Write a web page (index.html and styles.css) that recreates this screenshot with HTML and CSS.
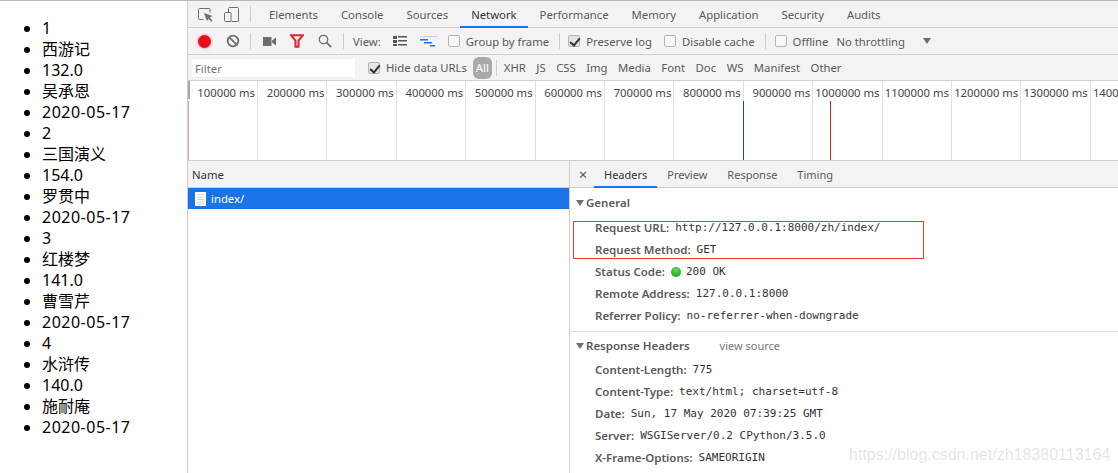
FILE: index.html
```html
<!DOCTYPE html>
<html lang="zh">
<head>
<meta charset="utf-8">
<title>Network</title>
<link rel="stylesheet" href="styles.css">
</head>
<body>
<div class="page">
  <aside class="left">
    <ul class="books">
      <li>1</li><li>西游记</li><li>132.0</li><li>吴承恩</li><li class="date">2020-05-17</li>
      <li>2</li><li>三国演义</li><li>154.0</li><li>罗贯中</li><li class="date">2020-05-17</li>
      <li>3</li><li>红楼梦</li><li>141.0</li><li>曹雪芹</li><li class="date">2020-05-17</li>
      <li>4</li><li>水浒传</li><li>140.0</li><li>施耐庵</li><li class="date">2020-05-17</li>
    </ul>
  </aside>
  <main class="dev">
    <nav class="tabs">
      <svg class="ic ic-inspect" width="15" height="15" viewBox="0 0 15 15"><path d="M5.500 12.500H1.500A1 1 0 0 1 .5 11.500V2.500A1 1 0 0 1 1.500 1.500H11A1 1 0 0 1 12 2.500V5.500" fill="none" stroke="#6e6e6e" stroke-width="1"/><path d="M6 6L14.500 9L11.700 10.500L14.500 13.500L13.200 14.700L10.500 11.700L9 14Z" fill="#6e6e6e"/></svg>
      <svg class="ic ic-device" width="15" height="15" viewBox="0 0 15 15"><path d="M4.500 5.500V1.500A1 1 0 0 1 5.500 .5H13.500A1 1 0 0 1 14.500 1.500V13.500A1 1 0 0 1 13.500 14.500H7.500" fill="none" stroke="#6e6e6e" stroke-width="1"/><rect x=".5" y="5.500" width="6.500" height="9" rx="1" fill="none" stroke="#6e6e6e"/></svg>
      <span class="vsep vsep-tabs"></span>
      <a class="tab">Elements</a><a class="tab">Console</a><a class="tab">Sources</a><a class="tab on">Network</a><a class="tab">Performance</a><a class="tab">Memory</a><a class="tab">Application</a><a class="tab">Security</a><a class="tab">Audits</a>
    </nav>
    <div class="toolbar">
      <span class="rec"></span>
      <svg class="ic ic-clear" width="14" height="14" viewBox="0 0 14 14"><circle cx="7" cy="7" r="5.300" fill="none" stroke="#6e6e6e" stroke-width="1.800"/><path d="M3.300 3.300L10.700 10.700" stroke="#6e6e6e" stroke-width="1.800"/></svg>
      <span class="vsep vsep-a"></span>
      <svg class="ic ic-cam" width="13" height="9" viewBox="0 0 13 9"><path d="M0 0H8.500V9H0ZM9 3.500L13 .5V8.500L9 5.500Z" fill="#6e6e6e"/></svg>
      <svg class="ic ic-funnel" width="14" height="14" viewBox="0 0 14 14"><path d="M1 1.200H13L8.500 6.500V12.800H5.500V6.500Z" fill="none" stroke="#e5202a" stroke-width="2"/></svg>
      <svg class="ic ic-search" width="14" height="14" viewBox="0 0 14 14"><circle cx="5.500" cy="5.500" r="4.200" fill="none" stroke="#6e6e6e" stroke-width="1.300"/><path d="M8.700 8.700L13.200 13.200" stroke="#6e6e6e" stroke-width="1.800"/></svg>
      <span class="vsep vsep-b"></span>
      <span class="lbl lbl-view">View:</span>
      <svg class="ic ic-list" width="14" height="10" viewBox="0 0 14 10"><path d="M0 0H4V3H0ZM5 0H14V1.500H5ZM0 4H4V7H0ZM5 4H14V5.500H5ZM0 8H4V10H0ZM5 8H14V9.500H5Z" fill="#555"/></svg>
      <svg class="ic ic-wfall" width="17" height="11" viewBox="0 0 17 11"><path d="M0 0H17V1H0Z" fill="#b9d2f2"/><path d="M0 3H8V4.500H0ZM4 6H12V7.500H4ZM10 9H15V10.500H10Z" fill="#1a73e8"/></svg>
      <label class="chk chk-frame"><span class="box"></span>Group by frame</label>
      <span class="vsep vsep-c"></span>
      <label class="chk chk-log"><span class="box checked"></span>Preserve log</label>
      <label class="chk chk-cache"><span class="box"></span>Disable cache</label>
      <span class="vsep vsep-d"></span>
      <label class="chk chk-off"><span class="box"></span>Offline</label>
      <span class="lbl lbl-throttle">No throttling</span>
      <span class="drop"></span>
    </div>
    <div class="filterbar">
      <span class="filter">Filter</span>
      <label class="chk chk-hide"><span class="box checked"></span>Hide data URLs</label>
      <span class="all">All</span>
      <span class="vsep vsep-e"></span>
      <span class="types"><span>XHR</span><span>JS</span><span>CSS</span><span>Img</span><span>Media</span><span>Font</span><span>Doc</span><span>WS</span><span>Manifest</span><span>Other</span></span>
    </div>
    <section class="overview">
      <div class="ticks">
        <span>100000 ms</span><span>200000 ms</span><span>300000 ms</span><span>400000 ms</span><span>500000 ms</span><span>600000 ms</span><span>700000 ms</span><span>800000 ms</span><span>900000 ms</span><span>1000000 ms</span><span>1100000 ms</span><span>1200000 ms</span><span>1300000 ms</span><span>1400000 ms</span>
      </div>
      <i class="handle"></i>
      <i class="mark mark-start"></i>
      <i class="mark mark-dom"></i>
      <i class="mark mark-load"></i>
    </section>
    <section class="split">
      <div class="names">
        <div class="names-head">Name</div>
        <div class="row-sel">
          <svg class="file" width="11" height="14" viewBox="0 0 11 14"><rect width="11" height="14" fill="#fff"/><path d="M2 2.500H9M2 5H9M2 7.500H9M2 10H9M2 12H9" stroke="#d4d4d4" stroke-width="1"/></svg>
          <span>index/</span>
        </div>
      </div>
      <div class="detail">
        <div class="detail-tabs">
          <span class="close">×</span>
          <a class="dtab on">Headers</a><a class="dtab">Preview</a><a class="dtab">Response</a><a class="dtab">Timing</a>
        </div>
        <div class="group group-general">
          <h3 class="title"><i class="tri"></i>General</h3>
          <div class="kv"><b>Request URL:</b><code>http://127.0.0.1:8000/zh/index/</code></div>
          <div class="kv"><b>Request Method:</b><code>GET</code></div>
          <div class="kv"><b>Status Code:</b><i class="dot"></i><code>200 OK</code></div>
          <div class="kv"><b>Remote Address:</b><code>127.0.0.1:8000</code></div>
          <div class="kv"><b>Referrer Policy:</b><code>no-referrer-when-downgrade</code></div>
          <i class="redbox"></i>
        </div>
        <div class="group group-resp">
          <h3 class="title"><i class="tri"></i>Response Headers<span class="src">view source</span></h3>
          <div class="kv"><b>Content-Length:</b><code>775</code></div>
          <div class="kv"><b>Content-Type:</b><code>text/html; charset=utf-8</code></div>
          <div class="kv"><b>Date:</b><code>Sun, 17 May 2020 07:39:25 GMT</code></div>
          <div class="kv"><b>Server:</b><code>WSGIServer/0.2 CPython/3.5.0</code></div>
          <div class="kv"><b>X-Frame-Options:</b><code>SAMEORIGIN</code></div>
        </div>
      </div>
    </section>
  </main>
</div>
<div class="watermark">https://blog.csdn.net/zh18380113164</div>
</body>
</html>
```
FILE: styles.css
```css
* { box-sizing: border-box; }
html, body { margin: 0; height: 473px; overflow: hidden; background: #fff; }
body { position: relative; font-family: "Noto Sans", sans-serif; font-size: 11.3px; color: #5a5a5a; }
.page { display: flex; height: 473px; border-top: 1px solid #b9b9b9; }
.left { width: 187px; flex: none; }
.books { margin: 17px 0 0; padding: 0 0 0 42px; list-style: disc; font-family: "Noto Sans", "Noto Sans CJK SC", sans-serif; font-size: 16px; line-height: 21px; color: #000; }
.books li { height: 21px; }
.books .date { letter-spacing: .5px; }
.dev { flex: 1; min-width: 0; border-left: 1px solid #cfcfcf; display: flex; flex-direction: column; overflow: hidden; }
.ic { flex: none; display: block; }
.vsep { flex: none; width: 1px; height: 16px; background: #cdcdcd; }
.tabs { display: flex; align-items: center; height: 27px; background: #f3f3f3; border-bottom: 1px solid #cfcfcf; padding-left: 10px; flex: none; }
.ic-device { margin-left: 11px; }
.vsep-tabs { margin: 0 6.500px 0 11px; }
.tab { height: 27px; line-height: 27px; padding: 0 11.500px; white-space: nowrap; }
.tab.on { color: #333; box-shadow: inset 0 -2px #1a73e8; }
.toolbar { display: flex; align-items: center; height: 27px; background: #f3f3f3; border-bottom: 1px solid #cfcfcf; flex: none; white-space: nowrap; }
.rec { width: 13px; height: 13px; margin-left: 10px; border-radius: 50%; background: #e8101c; box-shadow: 0 0 2px 1px #f4b4b4; flex: none; }
.ic-clear { margin-left: 15px; }
.vsep-a { margin-left: 10px; }
.ic-cam { margin-left: 12px; }
.ic-funnel { margin-left: 14px; }
.ic-search { margin-left: 14px; }
.vsep-b { margin-left: 11px; }
.lbl-view { margin-left: 9px; }
.ic-list { margin-left: 12px; }
.ic-wfall { margin-left: 13px; }
.chk { display: flex; align-items: center; white-space: nowrap; }
.box { width: 12px; height: 12px; flex: none; margin-right: 6px; border: 1px solid #b5b5b5; border-radius: 2px; background: #f8f8f8; position: relative; }
.box.checked { background: #e4e4e4; }
.box.checked::after { content: ""; position: absolute; left: 3px; top: 0; width: 4px; height: 8px; border: solid #333; border-width: 0 2px 2px 0; transform: rotate(40deg); }
.chk-frame { margin-left: 11px; }
.vsep-c { margin-left: 10px; }
.chk-log { margin-left: 8px; }
.chk-cache { margin-left: 12px; }
.vsep-d { margin-left: 10px; }
.chk-off { margin-left: 9px; }
.lbl-throttle { margin-left: 8px; }
.drop { margin-left: 18px; width: 0; height: 0; border: 4px solid transparent; border-top: 6px solid #6e6e6e; border-bottom: 0; }
.filterbar { display: flex; align-items: center; height: 26px; background: #f3f3f3; border-bottom: 1px solid #cfcfcf; flex: none; white-space: nowrap; }
.filter { width: 163px; height: 18px; margin: 0 0 0 4px; padding-left: 3px; line-height: 20px; background: #fff; color: #757575; flex: none; }
.chk-hide { margin-left: 13px; }
.all { width: 19px; height: 22px; margin-left: 6px; border-radius: 6px; background: #a9a9a9; color: #fff; text-align: center; line-height: 22px; flex: none; }
.vsep-e { margin-left: 4px; }
.types { display: flex; gap: 10.500px; margin-left: 7px; }
.overview { position: relative; height: 80px; border-bottom: 1px solid #cfcfcf; background: #fff; flex: none; overflow: hidden; }
.ticks { display: flex; height: 100%; padding-left: .6px; }
.ticks span { flex: none; width: 69.400px; height: 100%; padding: 4px 2px 0 0; text-align: right; border-right: 1px solid #e2e2e2; color: #444; white-space: nowrap; }
.handle { position: absolute; left: 0; top: 0; width: 2px; height: 18px; background: #a8a8a8; }
.mark { position: absolute; top: 20px; bottom: 0; width: 1px; }
.mark-start { left: 0; background: #e2a8a8; }
.mark-dom { left: 555px; background: #1c5c3a; }
.mark-load { left: 642px; background: #c4202a; }
.split { flex: 1; display: flex; min-height: 0; }
.names { width: 382px; flex: none; border-right: 1px solid #cfcfcf; }
.names-head { height: 27px; line-height: 27px; padding-left: 4px; background: #f3f3f3; border-bottom: 1px solid #cfcfcf; color: #333; }
.row-sel { height: 21px; display: flex; align-items: center; gap: 5px; padding-left: 7px; background: #1a73e8; color: #fff; }
.detail { flex: 1; min-width: 0; position: relative; }
.detail-tabs { display: flex; height: 27px; background: #f3f3f3; border-bottom: 1px solid #cfcfcf; padding-left: 8px; align-items: center; }
.close { width: 10px; font-size: 15px; line-height: 20px; text-align: center; color: #555; margin-right: 6px; }
.dtab { height: 27px; line-height: 27px; padding: 0 10px; font-size: 11px; }
.dtab.on { color: #333; box-shadow: inset 0 -2px #1a73e8; }
.group { position: relative; padding: 5px 0 0 6px; }
.group-general { height: 144px; border-bottom: 1px solid #dedede; }
.group-resp { padding-top: 4px; }
.title { margin: 0 0 4px; height: 20px; line-height: 20px; font-size: 11.500px; font-weight: 600; color: #5a5a5a; display: flex; align-items: center; }
.group-resp .title { margin-bottom: 3px; }
.tri { width: 0; height: 0; border: 4px solid transparent; border-top: 6px solid #6e6e6e; border-bottom: 0; margin-right: 2px; }
.src { margin-left: 30px; font-size: 11px; font-weight: 400; color: #777; }
.kv { height: 22px; line-height: 22px; padding-left: 19px; display: flex; align-items: center; white-space: nowrap; font-size: 11.500px; }
.kv b { font-weight: 600; color: #5a5a5a; margin-right: 6px; }
.kv code { font-family: "DejaVu Sans Mono", monospace; font-size: 11px; color: #333; }
.dot { width: 10px; height: 10px; margin-right: 5px; border-radius: 50%; background: radial-gradient(circle at 50% 30%, #5fdc5f, #0a9a0a); }
.redbox { position: absolute; left: 3px; top: 33px; width: 351px; height: 38px; border: 1px solid #f03a3a; }
.watermark { position: absolute; left: 849px; top: 446px; font-family: "Liberation Sans", sans-serif; font-size: 16px; color: rgba(150,150,150,.26); white-space: nowrap; }
```
